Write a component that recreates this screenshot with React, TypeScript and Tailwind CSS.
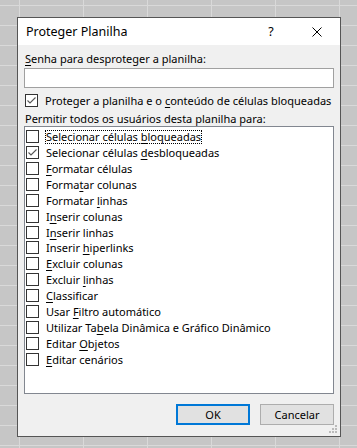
const items: { pre: string; u: string; post: string; checked?: boolean }[] = [
  { pre: "Selecionar células ", u: "b", post: "loqueadas" },
  { pre: "Selecionar células ", u: "d", post: "esbloqueadas", checked: true },
  { pre: "", u: "F", post: "ormatar células" },
  { pre: "Forma", u: "t", post: "ar colunas" },
  { pre: "Formatar ", u: "l", post: "inhas" },
  { pre: "I", u: "n", post: "serir colunas" },
  { pre: "I", u: "n", post: "serir linhas" },
  { pre: "Inserir ", u: "h", post: "iperlinks" },
  { pre: "", u: "E", post: "xcluir colunas" },
  { pre: "Excluir ", u: "l", post: "inhas" },
  { pre: "", u: "C", post: "lassificar" },
  { pre: "Usar ", u: "F", post: "iltro automático" },
  { pre: "Utilizar Ta", u: "b", post: "ela Dinâmica e Gráfico Dinâmico" },
  { pre: "Editar ", u: "O", post: "bjetos" },
  { pre: "", u: "E", post: "ditar cenários" },
];

function Check({ checked }: { checked?: boolean }) {
  return (
    <div className="w-[13px] h-[13px] shrink-0 border border-[#333] bg-white flex items-center justify-center">
      {checked && (
        <svg width="11" height="11" viewBox="0 0 11 11">
          <polyline points="1.5,5.5 4,8 9.5,2.5" fill="none" stroke="#555" strokeWidth="1.1" />
        </svg>
      )}
    </div>
  );
}

function U({ children }: { children: string }) {
  return <span className="underline underline-offset-[2px] decoration-1">{children}</span>;
}

export default function App() {
  return (
    <div className="w-[357px] h-[448px] overflow-hidden bg-[#c6c6c6] bg-[linear-gradient(to_right,#d9d9d9_1px,transparent_1px),linear-gradient(to_bottom,#d9d9d9_1px,transparent_1px)] bg-[size:64px_20px] bg-[position:19px_5px] pt-[17px] pl-[17px] font-['Segoe_UI','Noto_Sans',sans-serif] text-[11px] leading-[16px] text-black whitespace-nowrap">
      <div className="w-[324px] h-[420px] border border-[#555] bg-[#f0f0f0] flex flex-col">
        <div className="h-[30px] bg-white flex items-center pl-[8px] text-[12.5px]">
          <span className="flex-1">Proteger Planilha</span>
          <span className="w-[10px] text-center mr-[36px]">?</span>
          <svg width="10" height="10" viewBox="0 0 10 10" className="mr-[18px]">
            <path d="M0.5 0.5 L9.5 9.5 M9.5 0.5 L0.5 9.5" stroke="#000" strokeWidth="1" />
          </svg>
        </div>
        <div className="flex flex-col pl-[6px] pt-[6px]">
          <div className="pl-[1px] h-[16px]">
            <U>S</U>enha para desproteger a planilha:
          </div>
          <div className="mt-[1px] w-[310px] h-[20px] border border-[#a0a0a0] bg-white" />
          <div className="mt-[6px] flex items-center gap-[7px] pl-[1px] h-[13px]">
            <Check checked />
            <span>
              Proteger a planilha e o <U>c</U>onteúdo de células bloqueadas
            </span>
          </div>
          <div className="mt-[4px] pl-[1px] h-[15px]">Permitir todos os usuários desta planilha para:</div>
          <div className="w-[310px] h-[268px] border border-[#828790] bg-white pt-[3px] pl-[1px]">
            {items.map((it, i) => (
              <div key={i} className="h-[15.93px] flex items-start">
                <Check checked={it.checked} />
                <span
                  className={`ml-[6px] px-[1px] h-[14px] leading-[14px] ${i === 0 ? "outline outline-1 outline-dotted outline-[#000] -outline-offset-1" : ""}`}
                >
                  {it.pre}
                  <U>{it.u}</U>
                  {it.post}
                </span>
              </div>
            ))}
          </div>
          <div className="mt-[10px] flex gap-[10px] pl-[152px]">
            <button className="w-[74px] h-[21px] border-2 border-[#0078d7] bg-[#e1e1e1] flex items-center justify-center">
              OK
            </button>
            <button className="w-[74px] h-[21px] border border-[#adadad] bg-[#e1e1e1] flex items-center justify-center">
              Cancelar
            </button>
          </div>
        </div>
        <div className="flex-1 flex items-end justify-end pr-[3px] pb-[3px]">
          <svg width="8" height="8" viewBox="0 0 8 8">
            <rect x="6" y="0" width="2" height="2" fill="#bbb" />
            <rect x="3" y="3" width="2" height="2" fill="#bbb" />
            <rect x="6" y="3" width="2" height="2" fill="#bbb" />
            <rect x="0" y="6" width="2" height="2" fill="#bbb" />
            <rect x="3" y="6" width="2" height="2" fill="#bbb" />
            <rect x="6" y="6" width="2" height="2" fill="#bbb" />
          </svg>
        </div>
      </div>
    </div>
  );
}
